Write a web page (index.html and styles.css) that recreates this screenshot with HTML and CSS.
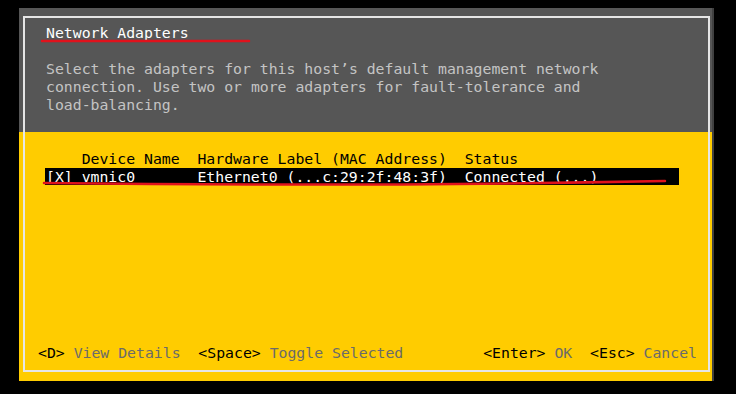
FILE: index.html
```html
<!DOCTYPE html>
<html lang="en">
<head>
    <meta charset="UTF-8">
    <meta name="viewport" content="width=device-width, initial-scale=1.0">
    <title>Network Adapters</title>
    <link rel="stylesheet" href="styles.css">
</head>
<body>
    <div class="dialog">
        <div class="frame">
            <div class="head">
                <div class="title">Network Adapters</div>
                <p class="desc">Select the adapters for this host’s default management network<br>connection. Use two or more adapters for fault-tolerance and<br>load-balancing.</p>
            </div>

            <div class="adapters">
                <div class="row header">
                    <span></span>
                    <span>Device Name</span>
                    <span>Hardware Label (MAC Address)</span>
                    <span>Status</span>
                </div>
                <div class="row selected">
                    <span>[X]</span>
                    <span>vmnic0</span>
                    <span>Ethernet0 (...c:29:2f:48:3f)</span>
                    <span>Connected (...)</span>
                </div>
            </div>

            <div class="footer">
                <div class="keys">
                    <span class="key">&lt;D&gt; <em>View Details</em></span>
                    <span class="key">&lt;Space&gt; <em>Toggle Selected</em></span>
                </div>
                <div class="keys">
                    <span class="key">&lt;Enter&gt; <em>OK</em></span>
                    <span class="key">&lt;Esc&gt; <em>Cancel</em></span>
                </div>
            </div>
        </div>
    </div>

    <!-- red marker strokes drawn over the screen -->
    <svg class="marks" width="736" height="394" viewBox="0 0 736 394">
        <path d="M42 41 L249 41" />
        <path d="M44 183 Q 360 187 665 181" />
    </svg>
</body>
</html>
```

FILE: styles.css
```css
* {
    margin: 0;
    padding: 0;
    box-sizing: border-box;
}

body {
    position: relative;
    width: 736px;
    height: 394px;
    background: #000;
    font-family: "DejaVu Sans Mono", "Liberation Mono", monospace;
    font-size: 14.8px;
    line-height: 18px;
    overflow: hidden;
}

.dialog {
    margin: 8px 0 0 19px;
    width: 695px;
    height: 373px;
    padding: 8px 2px 9px 4px;
    background: linear-gradient(#565656 0 124px, #ffcc00 124px);
    border-right: 2px solid #404040;
}

.frame {
    height: 100%;
    border: 2px solid #e6e6e6;
    display: flex;
    flex-direction: column;
}

.head {
    padding: 6px 0 0 21px;
}

.title {
    color: #fff;
    margin-bottom: 18px;
}

.desc {
    color: #c4c4c4;
}

.adapters {
    margin-top: 36px;
}

.row {
    display: grid;
    grid-template-columns: 4ch 13ch 30ch 1fr;
    white-space: pre;
}

.header {
    color: #000;
    padding-left: 21px;
}

.selected {
    margin-left: 20px;
    width: 634px;
    padding-left: 1px;
    line-height: 17px;
    background: #000;
    color: #fff;
}

.footer {
    margin-top: auto;
    padding: 0 11px 8px 13px;
    display: flex;
    justify-content: space-between;
}

.keys {
    display: flex;
    gap: 2ch;
}

.key {
    color: #000;
    white-space: pre;
}

.key em {
    font-style: normal;
    color: #6b6b6b;
}

.marks {
    position: absolute;
    left: 0;
    top: 0;
    pointer-events: none;
}

.marks path {
    fill: none;
    stroke: #e0121c;
    stroke-width: 2.5;
    stroke-linecap: round;
}
```
